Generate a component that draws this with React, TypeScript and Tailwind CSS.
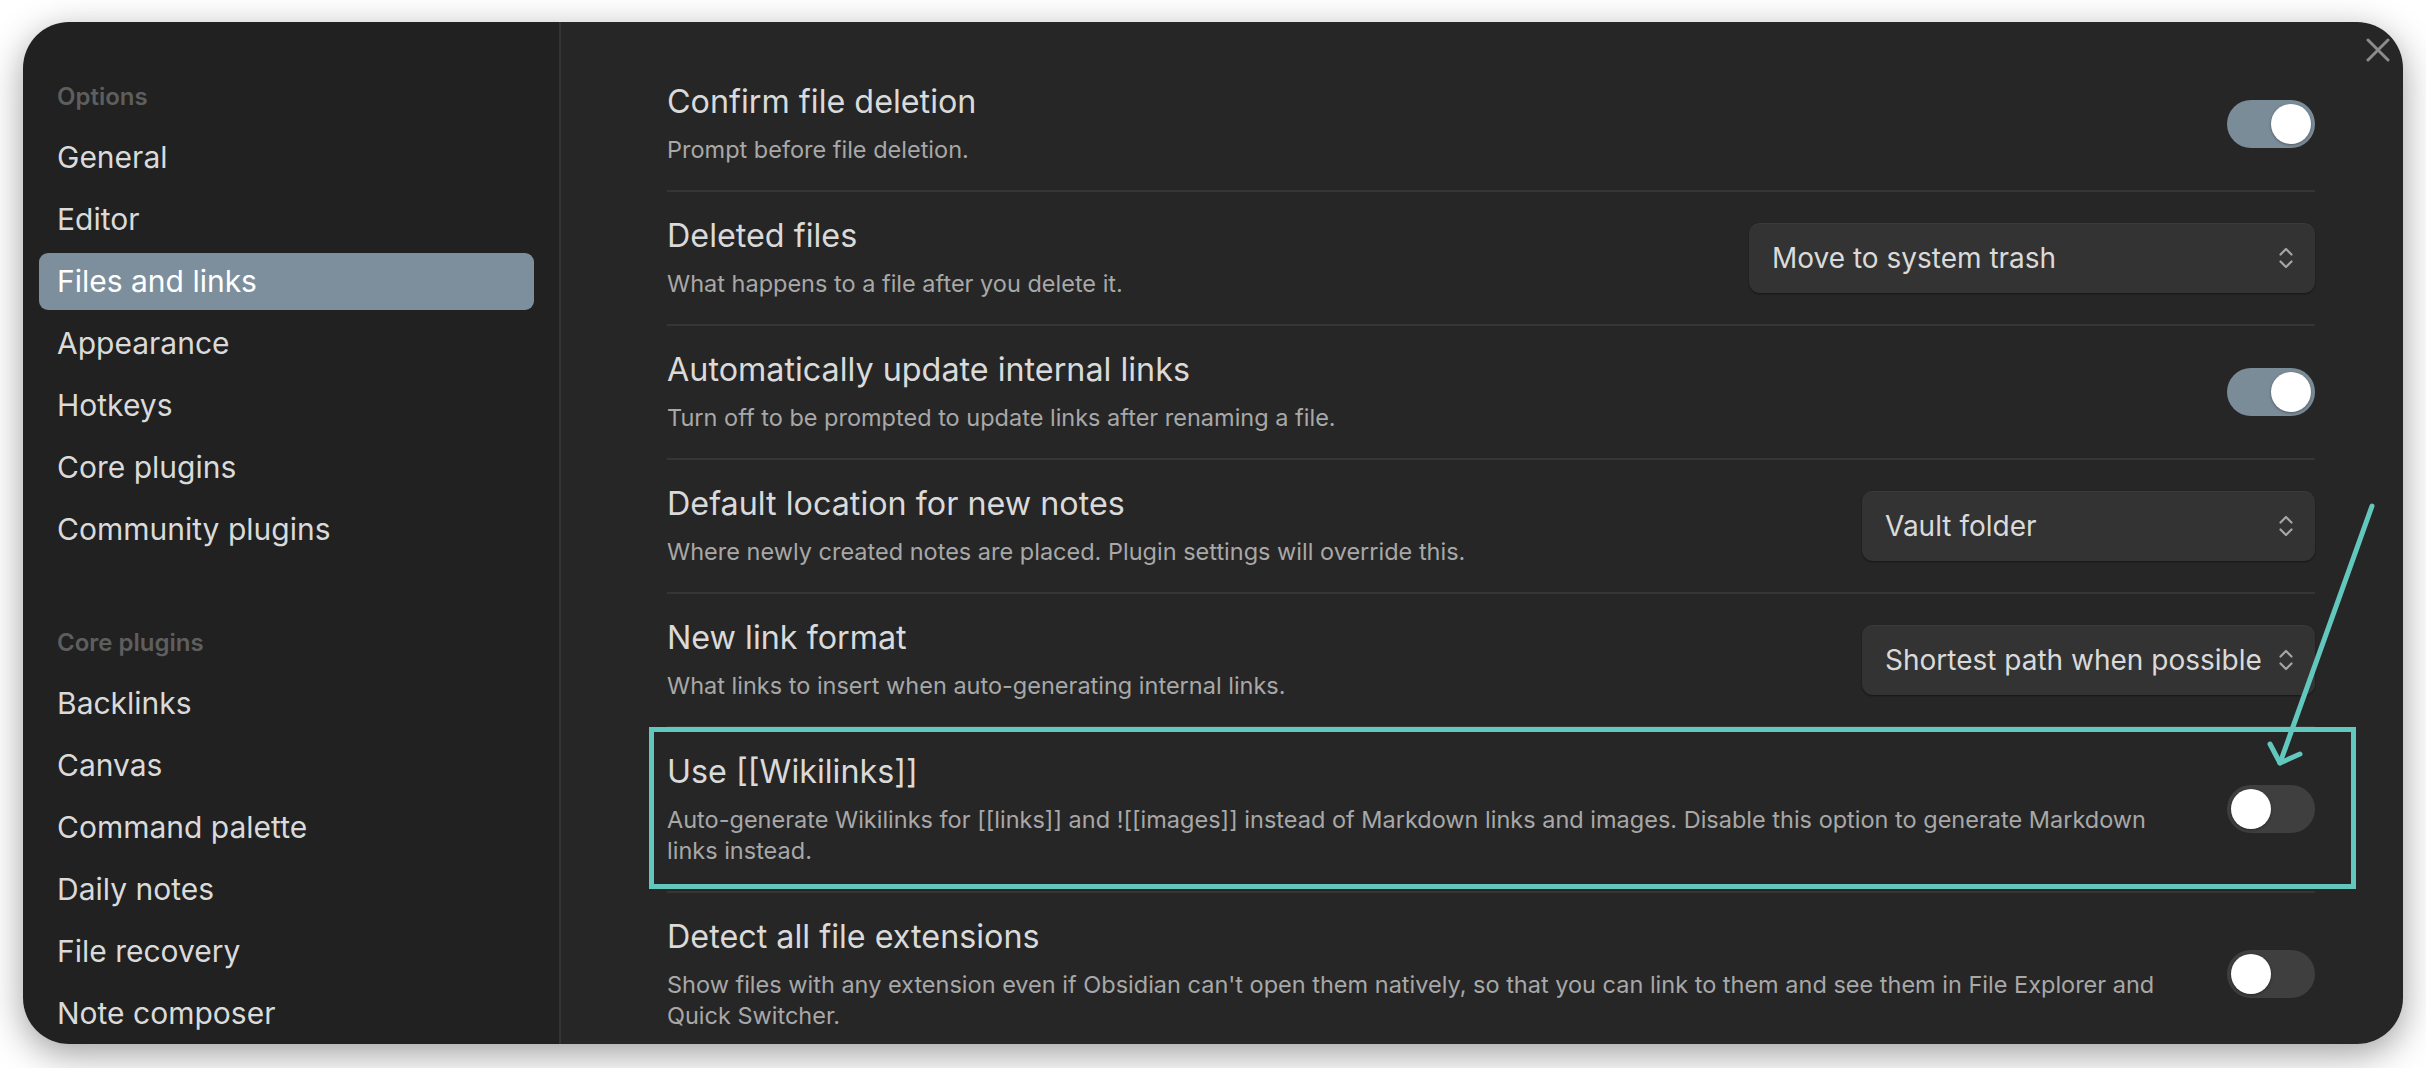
import React from "react";

type Row = {
  title: string;
  desc: string;
  control: { kind: "toggle"; on: boolean } | { kind: "select"; label: string; width: number };
};

const rows: Row[] = [
  { title: "Confirm file deletion", desc: "Prompt before file deletion.", control: { kind: "toggle", on: true } },
  {
    title: "Deleted files",
    desc: "What happens to a file after you delete it.",
    control: { kind: "select", label: "Move to system trash", width: 566 },
  },
  {
    title: "Automatically update internal links",
    desc: "Turn off to be prompted to update links after renaming a file.",
    control: { kind: "toggle", on: true },
  },
  {
    title: "Default location for new notes",
    desc: "Where newly created notes are placed. Plugin settings will override this.",
    control: { kind: "select", label: "Vault folder", width: 453 },
  },
  {
    title: "New link format",
    desc: "What links to insert when auto-generating internal links.",
    control: { kind: "select", label: "Shortest path when possible", width: 453 },
  },
  {
    title: "Use [[Wikilinks]]",
    desc: "Auto-generate Wikilinks for [[links]] and ![[images]] instead of Markdown links and images. Disable this option to generate Markdown links instead.",
    control: { kind: "toggle", on: false },
  },
  {
    title: "Detect all file extensions",
    desc: "Show files with any extension even if Obsidian can't open them natively, so that you can link to them and see them in File Explorer and Quick Switcher.",
    control: { kind: "toggle", on: false },
  },
];

const optionItems = ["General", "Editor", "Files and links", "Appearance", "Hotkeys", "Core plugins", "Community plugins"];
const coreItems = ["Backlinks", "Canvas", "Command palette", "Daily notes", "File recovery", "Note composer"];

function Toggle({ on }: { on: boolean }) {
  return (
    <div
      className={
        on
          ? "flex h-[48px] w-[88px] items-center justify-end rounded-full bg-[#7b8c99] px-[4px]"
          : "flex h-[48px] w-[88px] items-center justify-start rounded-full bg-[#3f3f3f] px-[4px]"
      }
    >
      <div className="h-[40px] w-[40px] rounded-full bg-white shadow-[0_1px_3px_rgba(0,0,0,0.35)]" />
    </div>
  );
}

function Select({ label, width }: { label: string; width: number }) {
  return (
    <div
      className="flex h-[70px] items-center justify-between rounded-[11px] bg-[#333333] pl-[23px] pr-[22px] shadow-[0_1px_2px_rgba(0,0,0,0.45),inset_0_1px_0_rgba(255,255,255,0.04)]"
      style={{ width }}
    >
      <span className="text-[28px] leading-none text-[#dadada]">{label}</span>
      <svg width="14" height="22" viewBox="0 0 14 22" fill="none" className="shrink-0">
        <path d="M1.5 7.5 L7 2 L12.5 7.5" stroke="#a6a6a6" strokeWidth="2.2" strokeLinecap="round" strokeLinejoin="round" />
        <path d="M1.5 14.5 L7 20 L12.5 14.5" stroke="#a6a6a6" strokeWidth="2.2" strokeLinecap="round" strokeLinejoin="round" />
      </svg>
    </div>
  );
}

function NavItem({ label, active }: { label: string; active?: boolean }) {
  return (
    <div
      className={
        active
          ? "flex h-[57px] items-center rounded-[9px] bg-[#7d8f9c] pl-[18px] text-[30px] text-white"
          : "flex h-[57px] items-center rounded-[9px] pl-[18px] text-[30px] text-[#dadada]"
      }
    >
      {label}
    </div>
  );
}

export default function App() {
  return (
    <div className="relative h-[1068px] w-[2426px] overflow-hidden bg-white font-[Inter,sans-serif]">
      <div className="absolute left-[23px] top-[22px] flex h-[1022px] w-[2380px] overflow-hidden rounded-[46px] shadow-[0_10px_36px_rgba(0,0,0,0.38)]">
        {/* Sidebar */}
        <div className="flex w-[538px] shrink-0 flex-col border-r-2 border-[#333333] bg-[#212121] pl-[16px] pr-[25px] pt-[53px]">
          <div className="mb-[10px] flex h-[44px] items-center pl-[18px] text-[24px] font-semibold text-[#5e5e5e]">Options</div>
          <div className="flex flex-col gap-[5px]">
            {optionItems.map((l) => (
              <NavItem key={l} label={l} active={l === "Files and links"} />
            ))}
          </div>
          <div className="mb-[10px] mt-[63px] flex h-[44px] items-center pl-[18px] text-[24px] font-semibold text-[#5e5e5e]">
            Core plugins
          </div>
          <div className="flex flex-col gap-[5px]">
            {coreItems.map((l) => (
              <NavItem key={l} label={l} />
            ))}
          </div>
        </div>

        {/* Content */}
        <div className="relative flex-1 bg-[#262626] pl-[106px] pr-[88px] pt-[34px]">
          {rows.map((r, i) => (
            <div
              key={r.title}
              className={
                i === 0
                  ? "flex items-center border-t-2 border-transparent pb-[25px] pt-[24px]"
                  : "flex items-center border-t-2 border-[#353535] pb-[25px] pt-[24px]"
              }
            >
              <div className="mr-[30px] min-w-0 flex-1">
                <div className="text-[32.3px] leading-[39px] text-[#dadada]">{r.title}</div>
                <div className="mt-[13px] text-[23.5px] leading-[31px] text-[#a8a8a8]">{r.desc}</div>
              </div>
              <div className="shrink-0">
                {r.control.kind === "toggle" ? (
                  <Toggle on={r.control.on} />
                ) : (
                  <Select label={r.control.label} width={r.control.width} />
                )}
              </div>
            </div>
          ))}
          {/* close button */}
          <svg
            className="absolute right-[13px] top-[16px]"
            width="24"
            height="24"
            viewBox="0 0 24 24"
            fill="none"
          >
            <path d="M2 2 L22 22 M22 2 L2 22" stroke="#8c8c8c" strokeWidth="3" strokeLinecap="round" />
          </svg>
        </div>
      </div>

      {/* annotation box */}
      <div className="absolute left-[649px] top-[727px] h-[162px] w-[1707px] border-[5px] border-[#62c7bc]" />
      {/* annotation arrow */}
      <svg className="absolute left-[2250px] top-[490px]" width="140" height="290" viewBox="0 0 140 290" fill="none">
        <path d="M122 16 L30 273" stroke="#62c7bc" strokeWidth="5" strokeLinecap="round" />
        <path d="M20 254 L30 273 L50 264" stroke="#62c7bc" strokeWidth="5" strokeLinecap="round" strokeLinejoin="round" />
      </svg>
    </div>
  );
}
